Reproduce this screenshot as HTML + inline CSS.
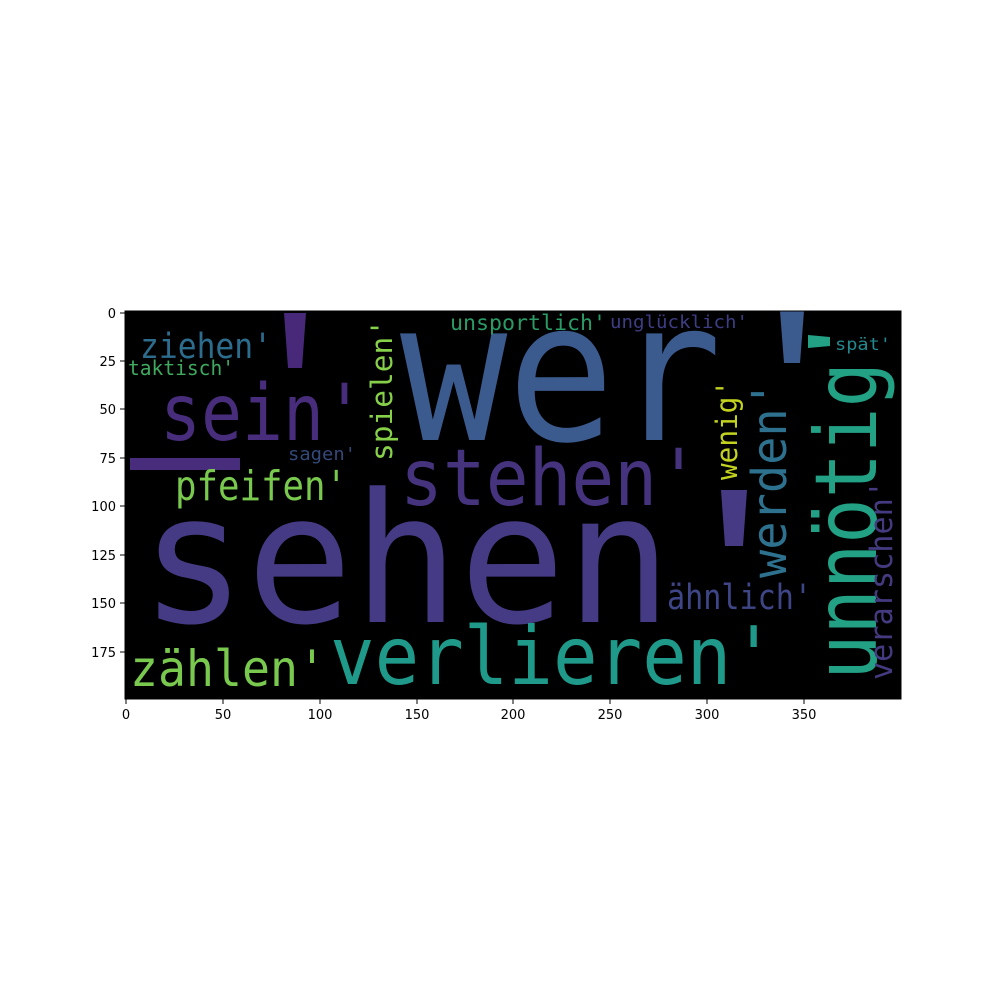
<!DOCTYPE html>
<html><head><meta charset="utf-8"><style>
html,body{margin:0;padding:0;background:#fff;width:1000px;height:1000px;overflow:hidden}
svg{display:block}
.w{font-family:"DejaVu Sans Mono","Liberation Mono",monospace}
.t{font-family:"DejaVu Sans","Liberation Sans",sans-serif;font-size:13px;fill:#000}
</style></head><body>
<svg width="1000" height="1000" viewBox="0 0 1000 1000" xmlns="http://www.w3.org/2000/svg">
<rect x="125" y="311" width="776" height="388" fill="#000"/>
<g class="w">
<polygon points="284,313 306,313 302,368 288,368" fill="#482878"/>
<rect x="130" y="458" width="110" height="12" fill="#472d7b"/>
<polygon points="780,311 804,311 800,363 784,363" fill="#3b5a8e"/>
<polygon points="808,335 830,337 830,346 808,348" fill="#22a185"/>
<polygon points="721,490 747,490 743,546 725,546" fill="#463a85"/>

<text x="400" y="440" font-size="195" textLength="322" lengthAdjust="spacingAndGlyphs" fill="#3b5a8e">wer</text>
<text x="140" y="622" font-size="180" textLength="532" lengthAdjust="spacingAndGlyphs" fill="#453b85">sehen</text>
<text x="400" y="505" font-size="78" textLength="300" lengthAdjust="spacingAndGlyphs" fill="#46337e">stehen'</text>
<text x="160" y="440" font-size="78" textLength="205" lengthAdjust="spacingAndGlyphs" fill="#472d7b">sein'</text>
<text x="140" y="358" font-size="35" textLength="132" lengthAdjust="spacingAndGlyphs" fill="#2c6d8e">ziehen'</text>
<text x="128" y="375" font-size="20" textLength="106" lengthAdjust="spacingAndGlyphs" fill="#3fa95f">taktisch'</text>
<text x="288" y="460" font-size="18" textLength="68" lengthAdjust="spacingAndGlyphs" fill="#34497a">sagen'</text>
<text x="175" y="500" font-size="41" textLength="172" lengthAdjust="spacingAndGlyphs" fill="#7ac94f">pfeifen'</text>
<text x="130" y="686" font-size="50" textLength="196" lengthAdjust="spacingAndGlyphs" fill="#7ac94f">zählen'</text>
<text x="330" y="684" font-size="80" textLength="446" lengthAdjust="spacingAndGlyphs" fill="#1f9a8a">verlieren'</text>
<text x="450" y="330" font-size="21" textLength="156" lengthAdjust="spacingAndGlyphs" fill="#2a9b66">unsportlich'</text>
<text x="610" y="328" font-size="18" textLength="138" lengthAdjust="spacingAndGlyphs" fill="#3e3d84">unglücklich'</text>
<text x="835" y="350" font-size="17" textLength="56" lengthAdjust="spacingAndGlyphs" fill="#23898e">spät'</text>
<text x="667" y="609" font-size="35" textLength="145" lengthAdjust="spacingAndGlyphs" fill="#3f4688">ähnlich'</text>

<text transform="translate(392,461) rotate(-90)" font-size="29" textLength="142" lengthAdjust="spacingAndGlyphs" fill="#86d04a">spielen'</text>
<text transform="translate(737,480) rotate(-90)" font-size="29" textLength="100" lengthAdjust="spacingAndGlyphs" fill="#c2d21f">wenig'</text>
<text transform="translate(786,578) rotate(-90)" font-size="48" textLength="198" lengthAdjust="spacingAndGlyphs" fill="#2d718e">werden'</text>
<text transform="translate(876,680) rotate(-90)" font-size="86" textLength="318" lengthAdjust="spacingAndGlyphs" fill="#22a185">unnötig</text>
<text transform="translate(892,680) rotate(-90)" font-size="31" textLength="200" lengthAdjust="spacingAndGlyphs" fill="#433a80">verarschen'</text>
</g>
<rect x="125" y="311" width="776" height="388" fill="none" stroke="#000" stroke-width="1"/>
<g stroke="#000" stroke-width="1">
<line x1="120" y1="313" x2="125" y2="313"/><line x1="120" y1="361" x2="125" y2="361"/>
<line x1="120" y1="409" x2="125" y2="409"/><line x1="120" y1="458" x2="125" y2="458"/>
<line x1="120" y1="506" x2="125" y2="506"/><line x1="120" y1="555" x2="125" y2="555"/>
<line x1="120" y1="603" x2="125" y2="603"/><line x1="120" y1="652" x2="125" y2="652"/>
<line x1="126" y1="699" x2="126" y2="704"/><line x1="223" y1="699" x2="223" y2="704"/>
<line x1="320" y1="699" x2="320" y2="704"/><line x1="417" y1="699" x2="417" y2="704"/>
<line x1="513" y1="699" x2="513" y2="704"/><line x1="610" y1="699" x2="610" y2="704"/>
<line x1="707" y1="699" x2="707" y2="704"/><line x1="804" y1="699" x2="804" y2="704"/>
</g>
<g class="t" text-anchor="end">
<text x="116" y="318">0</text><text x="116" y="366">25</text><text x="116" y="414">50</text>
<text x="116" y="463">75</text><text x="116" y="511">100</text><text x="116" y="560">125</text>
<text x="116" y="608">150</text><text x="116" y="657">175</text>
</g>
<g class="t" text-anchor="middle">
<text x="126" y="719">0</text><text x="223" y="719">50</text><text x="320" y="719">100</text>
<text x="417" y="719">150</text><text x="513" y="719">200</text><text x="610" y="719">250</text>
<text x="707" y="719">300</text><text x="804" y="719">350</text>
</g>
</svg>
</body></html>
